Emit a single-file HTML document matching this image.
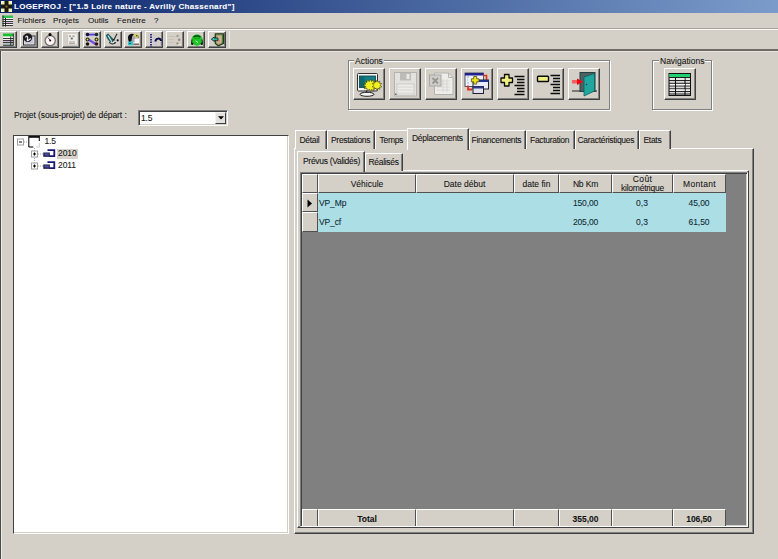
<!DOCTYPE html>
<html><head><meta charset="utf-8">
<style>
*{box-sizing:border-box;margin:0;padding:0}
html,body{width:778px;height:559px;overflow:hidden;background:#D4D0C8;font-family:"Liberation Sans",sans-serif;font-size:8.5px;color:#000}
.a{position:absolute}
.t{position:absolute;white-space:nowrap;line-height:1;color:#141414;-webkit-text-stroke:0.08px currentColor}
.n{letter-spacing:-0.3px}
#title{left:0;top:0;width:778px;height:13px;background:linear-gradient(to right,#0A246A,#7B9CCB)}
#title .t{color:#fff;font-weight:bold;font-size:8.7px;left:14px;top:2px}
.menu .t{top:16px}
.tb{position:absolute;top:31px;width:18px;height:17px;border-top:1px solid #fff;border-left:1px solid #fff;border-right:1px solid #404040;border-bottom:1px solid #404040;box-shadow:inset -1px -1px 0 #808080}
.ab{position:absolute;top:68px;width:32px;height:32px;border-top:1px solid #fff;border-left:1px solid #fff;border-right:1px solid #404040;border-bottom:1px solid #404040;box-shadow:inset -1px -1px 0 #808080}
.grp{position:absolute;border:1px solid #808080;box-shadow:1px 1px 0 #fff, inset 1px 1px 0 #fff}
.grp .t{top:-3px;background:#D4D0C8;padding:0 1px}
.sunk{border-top:1px solid #808080;border-left:1px solid #808080;border-right:1px solid #fff;border-bottom:1px solid #fff;box-shadow:inset 1px 1px 0 #404040, inset -1px -1px 0 #D4D0C8}
.raised{border-top:1px solid #fff;border-left:1px solid #fff;border-right:1px solid #404040;border-bottom:1px solid #404040;box-shadow:inset -1px -1px 0 #808080}
.tab{position:absolute;top:130px;height:19px;background:#D4D0C8;border-top:1px solid #fff;border-left:1px solid #fff;border-right:1px solid #404040;box-shadow:inset -1px 0 0 #808080}
.tab .t{top:6px;left:4px}
.hc{position:absolute;background:#D4D0C8;border-top:1px solid #fff;border-left:1px solid #fff;border-right:1px solid #505050;border-bottom:1px solid #505050}
.fc{position:absolute;background:#D4D0C8;border-top:1px solid #fff;border-left:1px solid #fff;border-right:1px solid #505050}
.hc .t{width:100%;text-align:center;left:0}
.cy{position:absolute;background:#ACDEE6}
.num{text-align:right}
.m{top:17px;font-size:8px}
.c{text-align:center}
.d{color:#102830}
.b{font-weight:bold}
</style></head><body>

<div id="title" class="a"></div>
<span class="t" style="left:14px;top:3px;color:#fff;font-weight:bold;font-size:8px;letter-spacing:0.34px">LOGEPROJ - ["1.5 Loire nature - Avrilly Chassenard"]</span>

<span class="t m" style="left:17.5px">Fichiers</span>
<span class="t m" style="left:53px;letter-spacing:0.2px">Projets</span>
<span class="t m" style="left:88px">Outils</span>
<span class="t m" style="left:117px;letter-spacing:0.2px">Fenêtre</span>
<span class="t m" style="left:154px">?</span>

<div class="a" style="left:0;top:28px;width:778px;height:1px;background:#A8A49C"></div>
<div class="a" style="left:0;top:29px;width:778px;height:1px;background:#F8F6F2"></div>
<div class="a" style="left:0;top:49px;width:778px;height:2px;background:#6E6A64"></div>
<div class="a" style="left:0;top:51px;width:778px;height:1px;background:#E8E6E0"></div>
<div class="a" style="left:0;top:51px;width:1px;height:508px;background:#4E4C48"></div>
<div class="a" style="left:1px;top:52px;width:1px;height:507px;background:#ECEAE6"></div>

<!-- toolbar buttons -->
<div class="tb" style="left:-1px"></div>
<div class="tb" style="left:20px"></div>
<div class="tb" style="left:41px"></div>
<div class="tb" style="left:62px"></div>
<div class="tb" style="left:83px"></div>
<div class="tb" style="left:104px"></div>
<div class="tb" style="left:124px"></div>
<div class="tb" style="left:145px"></div>
<div class="tb" style="left:166px"></div>
<div class="tb" style="left:187px"></div>
<div class="tb" style="left:208px"></div>
<div class="a" style="left:229px;top:31px;width:1px;height:17px;background:#ECEAE6"></div>

<!-- group boxes -->
<div class="grp" style="left:348px;top:60px;width:262px;height:50px"></div>
<div class="grp" style="left:652px;top:60px;width:60px;height:50px"></div>
<span class="t" style="left:354px;top:57px;background:#D4D0C8;padding:0 1px">Actions</span>
<span class="t" style="left:659px;top:57px;background:#D4D0C8;padding:0 1px">Navigations</span>
<div class="ab" style="left:353px"></div>
<div class="ab" style="left:389px"></div>
<div class="ab" style="left:425px"></div>
<div class="ab" style="left:461px"></div>
<div class="ab" style="left:497px"></div>
<div class="ab" style="left:532px"></div>
<div class="ab" style="left:568px"></div>
<div class="ab" style="left:664px;top:68px"></div>

<span class="t" style="left:14px;top:111px;letter-spacing:-0.08px">Projet (sous-projet) de départ :</span>
<div class="a sunk" style="left:138px;top:110px;width:90px;height:16px;background:#fff">
  <div class="hc" style="left:76px;top:1px;width:11px;height:12px;background:#E4E2DE;border-color:#F4F2EE #404040 #404040 #F4F2EE"></div>
  <svg class="a" style="left:79px;top:5px" width="6" height="4"><path d="M0 0.2h6L3 3.5z" fill="#000"/></svg>
</div>
<span class="t" style="left:141px;top:114px;letter-spacing:-0.15px">1.5</span>

<!-- Tree -->
<div class="a" style="left:13px;top:135px;width:276px;height:399px;background:#fff;border-left:1px solid #404040;border-top:1px solid #404040;border-right:1px solid #fff;border-bottom:1px solid #fff;box-shadow:inset -1px -1px 0 #D4D0C8"></div>
<div class="a" style="left:57px;top:148.5px;width:21px;height:10.5px;background:#D8D4CC"></div>
<span class="t" style="left:44.5px;top:137px;letter-spacing:-0.15px">1.5</span>
<span class="t" style="left:58px;top:149px;letter-spacing:-0.1px">2010</span>
<span class="t" style="left:58px;top:161px;letter-spacing:-0.1px">2011</span>

<!-- Outer tab panel -->
<div class="a raised" style="left:294px;top:148px;width:460px;height:386px;background:#D4D0C8"></div>
<div class="tab" style="left:295px;width:32px"></div>
<div class="tab" style="left:327px;width:48px"></div>
<div class="tab" style="left:375px;width:34px"></div>
<div class="tab" style="left:469px;width:57px"></div>
<div class="tab" style="left:526px;width:49px"></div>
<div class="tab" style="left:575px;width:64px"></div>
<div class="tab" style="left:639px;width:32px"></div>
<div class="tab" style="left:407px;top:128px;height:22px;width:62px"></div>
<span class="t n" style="left:299.5px;top:136px">Détail</span>
<span class="t n" style="left:331px;top:136px">Prestations</span>
<span class="t n" style="left:379.5px;top:136px">Temps</span>
<span class="t n" style="left:412px;top:134px">Déplacements</span>
<span class="t n" style="left:471.5px;top:136px">Financements</span>
<span class="t n" style="left:530px;top:136px">Facturation</span>
<span class="t n" style="left:577.5px;top:136px">Caractéristiques</span>
<span class="t n" style="left:643.5px;top:136px">Etats</span>

<!-- Inner tab panel -->
<div class="a raised" style="left:297px;top:170px;width:452px;height:358px;background:#D4D0C8"></div>
<div class="tab" style="left:365px;top:153px;height:18px;width:38px"></div>
<div class="tab" style="left:297px;top:151px;height:21px;width:68px"></div>
<span class="t n" style="left:303px;top:157px">Prévus (Validés)</span>
<span class="t n" style="left:368.5px;top:158px">Réalisés</span>

<!-- Grid -->
<div class="a sunk" style="left:300px;top:172px;width:448px;height:355px;background:#808080"></div>

<!-- header row -->
<div class="hc" style="left:302px;top:174px;width:16px;height:19px"></div>
<div class="hc" style="left:318px;top:174px;width:98px;height:19px"></div>
<div class="hc" style="left:416px;top:174px;width:98px;height:19px"></div>
<div class="hc" style="left:514px;top:174px;width:45px;height:19px"></div>
<div class="hc" style="left:559px;top:174px;width:53px;height:19px"></div>
<div class="hc" style="left:612px;top:174px;width:61px;height:19px"></div>
<div class="hc" style="left:673px;top:174px;width:53px;height:19px"></div>
<span class="t c" style="left:318px;width:98px;top:180px">Véhicule</span>
<span class="t c" style="left:416px;width:97px;top:180px">Date début</span>
<span class="t c" style="left:514px;width:45px;top:180px">date fin</span>
<span class="t c" style="left:559px;width:53px;top:180px;letter-spacing:-0.15px">Nb Km</span>
<span class="t c" style="left:612px;width:61px;top:175px;letter-spacing:0.4px">Coût</span>
<span class="t c" style="left:612px;width:61px;top:184px;letter-spacing:-0.25px">kilométrique</span>
<span class="t c" style="left:673px;width:53px;top:180px;letter-spacing:0.3px">Montant</span>

<!-- data rows -->
<div class="hc" style="left:302px;top:193px;width:16px;height:19px;border-bottom-color:#505050"></div>
<div class="hc" style="left:302px;top:212px;width:16px;height:20px;border-bottom-color:#505050"></div>
<div class="cy" style="left:318px;top:193px;width:408px;height:39px"></div>
<svg class="a" style="left:307px;top:199px" width="6" height="9"><path d="M0.5 0.5L5 4.5L0.5 8.5z" fill="#000"/></svg>
<span class="t d" style="left:319px;top:199px;letter-spacing:-0.13px">VP_Mp</span>
<span class="t d" style="left:319px;top:218px;letter-spacing:-0.13px">VP_cf</span>
<span class="t d c" style="left:559px;width:53px;top:199px;letter-spacing:-0.13px">150,00</span>
<span class="t d c" style="left:559px;width:53px;top:218px;letter-spacing:-0.13px">205,00</span>
<span class="t d c" style="left:612px;width:60px;top:199px;letter-spacing:0.1px">0,3</span>
<span class="t d c" style="left:612px;width:60px;top:218px;letter-spacing:0.1px">0,3</span>
<span class="t d c" style="left:673px;width:52px;top:199px;letter-spacing:-0.07px">45,00</span>
<span class="t d c" style="left:673px;width:52px;top:218px;letter-spacing:-0.07px">61,50</span>

<!-- footer row -->
<div class="fc" style="left:302px;top:509px;width:16px;height:17px"></div>
<div class="fc" style="left:318px;top:509px;width:98px;height:17px"></div>
<div class="fc" style="left:416px;top:509px;width:98px;height:17px"></div>
<div class="fc" style="left:514px;top:509px;width:45px;height:17px"></div>
<div class="fc" style="left:559px;top:509px;width:53px;height:17px"></div>
<div class="fc" style="left:612px;top:509px;width:61px;height:17px"></div>
<div class="fc" style="left:673px;top:509px;width:53px;height:17px"></div>
<span class="t c b" style="left:318px;width:98px;top:515px">Total</span>
<span class="t c b" style="left:559px;width:53px;top:515px">355,00</span>
<span class="t c b" style="left:673px;width:52px;top:515px;letter-spacing:-0.08px">106,50</span>

<!-- ICON OVERLAY -->
<svg class="a" style="left:0;top:0" width="778" height="559" viewBox="0 0 778 559">
<!-- title icon -->
<rect x="1" y="1" width="11" height="11" fill="#ECECA8"/>
<path d="M4.5 1h4v3.5h3.5v4h-3.5v3.5h-4v-3.5H1v-4h3.5z" fill="#1A1A10"/>
<path d="M5.5 5.5h2v2h-2z" fill="#8A6A20"/>
<path d="M1 1h2.5v2.5H1zM9.5 1H12v2.5H9.5zM1 9.5h2.5V12H1zM9.5 9.5H12V12H9.5z" fill="#F8F8C0"/>
<!-- menu icon -->
<rect x="2.5" y="15.5" width="10.5" height="2.5" fill="#30C050"/>
<rect x="2.5" y="18" width="10.5" height="8" fill="#F8F4F8"/>
<path d="M2.5 19.5h10.5M2.5 21.5h10.5M2.5 23.5h10.5M2.5 25.5h10.5" stroke="#202820" stroke-width="0.9"/>
<path d="M3 15.5v11M5.5 18v8.5" stroke="#182018" stroke-width="1"/>
<rect x="6" y="22" width="7" height="1" fill="#E0C0E8"/>
<!-- TB1 grid -->
<rect x="3" y="33.5" width="10.5" height="3" fill="#18C030"/>
<rect x="3" y="36.5" width="10.5" height="9" fill="#F4F4F0"/>
<rect x="3" y="40.8" width="10.5" height="1.4" fill="#D8B0E8"/>
<rect x="3" y="43" width="10.5" height="2.5" fill="#B8C4C0"/>
<path d="M3 38.5h10.5M3 40.5h10.5M3 42.5h10.5M3 45.3h10.5M10.7 36.5v9M13.3 33.5v12" stroke="#202820" stroke-width="0.9"/>
<!-- TB2 -->
<rect x="23.5" y="36" width="11.5" height="9" fill="#E4E2E8" stroke="#303030" stroke-width="1"/>
<rect x="25" y="37.5" width="8.5" height="6" fill="#C8C4D8"/>
<circle cx="27.8" cy="37.6" r="4.4" fill="#1A1A20"/>
<path d="M25.5 37.5c1-2 2.5-1.5 2.2 0.5s-1 3 0.3 2.5c1.5-0.5 2-2 3-1.5" stroke="#F0F0F0" stroke-width="1.2" fill="none"/>
<!-- TB3 stopwatch -->
<circle cx="50.2" cy="40.6" r="5.1" fill="#FAF2F4" stroke="#747070" stroke-width="1.3"/>
<circle cx="50" cy="34.6" r="1.5" fill="#000"/>
<path d="M48 37.6l2.2 2.8" stroke="#504040" stroke-width="0.9"/>
<circle cx="50.2" cy="40.5" r="1" fill="#300808"/>
<!-- TB4 disabled -->
<rect x="67" y="34" width="10" height="11" fill="#EEECE8"/>
<path d="M67.5 34.5v10.5h9.5" stroke="#C4C0B8" stroke-width="0.8" fill="none"/>
<path d="M69 36.2h2M72.5 36.2h2" stroke="#8C8A84" stroke-width="1.2"/>
<rect x="70.8" y="37.6" width="2" height="1.8" fill="#6A6864"/>
<path d="M69 42h6M69 43.6h6" stroke="#A4A29C" stroke-width="1"/>
<!-- TB5 dots -->
<path d="M89 34.6h6" stroke="#5A3CE0" stroke-width="1.8"/>
<path d="M88.5 39.5l7 4.5" stroke="#7050E8" stroke-width="2.2"/>
<circle cx="87.5" cy="34.5" r="1.8" fill="#101040"/>
<circle cx="96.5" cy="34.5" r="1.8" fill="#103030"/>
<circle cx="87.5" cy="39.5" r="1.9" fill="#202010"/>
<circle cx="87.5" cy="39.5" r="0.9" fill="#E0E040"/>
<circle cx="96.5" cy="39.5" r="1.9" fill="#202010"/>
<circle cx="96.5" cy="39.5" r="0.9" fill="#E0E040"/>
<circle cx="87.5" cy="44" r="1.8" fill="#201010"/>
<circle cx="96.5" cy="44" r="1.8" fill="#401010"/>
<!-- TB6 check -->
<path d="M105.8 35.2L108.2 33.6L113.8 39.6L112.6 42.8L110.5 42.5C108.5 40.5 106.8 38 105.8 35.2z" fill="#1E5A5A"/>
<path d="M108 35.5L111.8 41.8" stroke="#C8F4F0" stroke-width="1.1"/>
<path d="M109.3 42.3Q112 45.2 115.8 42.6" stroke="#181818" stroke-width="1.2" fill="none"/>
<path d="M110.5 42.8h3.5" stroke="#F0FAFA" stroke-width="0.9"/>
<path d="M117 33.8L114.2 39.2" stroke="#282828" stroke-width="1.1"/>
<circle cx="117.7" cy="40.3" r="1.1" fill="#101010"/>
<circle cx="113.8" cy="39.8" r="0.9" fill="#101010"/>
<!-- TB7 person -->
<rect x="131" y="36" width="4.5" height="6" fill="#A8A8B4"/>
<path d="M128 37.5C128 33.5 133 33 134.5 34.3L132.3 36L131.3 41.5L129 42.3C128.3 40.5 128 39 128 37.5z" fill="#0E0E10"/>
<path d="M133.5 34L137.5 33.8L139.8 36.5L137.5 38.3L134.5 36.3z" fill="#D4CC60"/>
<circle cx="136.8" cy="35.8" r="0.7" fill="#302810"/><circle cx="138.3" cy="37" r="0.6" fill="#302810"/>
<path d="M128 42L132.5 41L133.5 45.3H128z" fill="#30C4CC"/>
<path d="M129 43.5h2" stroke="#105050" stroke-width="0.8"/>
<rect x="134.5" y="39" width="4.5" height="4.5" fill="#F6F2F6"/>
<path d="M133.5 44.2h5.5" stroke="#603838" stroke-width="1"/>
<!-- TB8 tree -->
<path d="M151 34v13" stroke="#343088" stroke-width="2" stroke-dasharray="1.6 0.9"/>
<path d="M153 35.5h1.5M153 38.5h1.5M153 41.5h1.5M153 44.5h1.5" stroke="#C0C0F0" stroke-width="1.2"/>
<path d="M155.5 41.5c0-3.5 5.5-4 5.5-0.5" stroke="#0A0A50" stroke-width="2" fill="none"/>
<path d="M156 42.5v3M160.5 42v3" stroke="#B8B8E8" stroke-width="1"/>
<!-- TB9 disabled -->
<path d="M168.5 36.5h7M168.5 39.5h5M168.5 42.5h6" stroke="#C8C2B4" stroke-width="1"/>
<circle cx="177.5" cy="36" r="1.2" fill="#A89E8C"/>
<circle cx="179.2" cy="39.8" r="1.3" fill="#948A78"/>
<circle cx="177.5" cy="43.4" r="1.2" fill="#9A907E"/>
<path d="M178 44.5h3" stroke="#E8E4DC" stroke-width="1"/>
<!-- TB10 bug -->
<ellipse cx="197" cy="40" rx="5.6" ry="5.8" fill="#22C22A"/>
<path d="M193 36.8C194 34.8 200 34.8 201 36.8L199.5 37.5C198.5 36.5 195.5 36.5 194.5 37.5z" fill="#0A4A0A"/>
<path d="M192 39.5L191.5 43.5M202 39.5L202.5 43.5" stroke="#0A300A" stroke-width="1"/>
<circle cx="192.2" cy="43.8" r="1.2" fill="#082808"/>
<circle cx="201.8" cy="43.8" r="1.2" fill="#082808"/>
<path d="M195.5 40.8l2.5 1.8" stroke="#B0F8B0" stroke-width="1"/>
<path d="M194 38.5h6" stroke="#10A010" stroke-width="0.8"/>
<!-- TB11 door -->
<path d="M215.3 33.8h8.3v9.5l-5.3 2.4l-3-2.2z" fill="#A8A070" stroke="#1E3A1E" stroke-width="1.2"/>
<path d="M217.5 36l4.5-0.5v7l-4.5 1.5z" fill="#C8B890"/>
<path d="M222.3 35v8" stroke="#3A7A2A" stroke-width="1"/>
<path d="M217 40.8h3" stroke="#E07070" stroke-width="1.2"/>
<path d="M211.3 39.2l3-2.3v1.2h3.7v2.2h-3.7v1.2z" fill="#38C8B0" stroke="#0A1A1A" stroke-width="0.8"/>
<!-- A1 monitor -->
<rect x="357.5" y="73.5" width="20" height="17.5" rx="1" fill="#F0F4F4" stroke="#303030" stroke-width="1"/>
<rect x="359.5" y="76" width="16" height="11.5" fill="#10808A" stroke="#183838" stroke-width="0.8"/>
<rect x="360" y="76.5" width="4.5" height="10.5" fill="#0A6A70"/>
<path d="M366.5 90.5q-0.5 2 1.5 2.5" stroke="#202020" stroke-width="1.2" fill="none"/>
<ellipse cx="367" cy="94.3" rx="7" ry="2" fill="#F4F4F4" stroke="#202020" stroke-width="1"/>
<path d="M370.5 79l1.2 2.6 2-2 0.2 2.8 2.8-0.6-1.6 2.3 2.6 1.2-2.6 1.2 1.6 2.3-2.8-0.5-0.3 2.8-2-2-1.2 2.6-1.1-2.6-2 2-0.3-2.8-2.8 0.5 1.6-2.3-2.6-1.2 2.6-1.2-1.6-2.3 2.8 0.6 0.2-2.8 2 2z" fill="#F2F020" stroke="#383810" stroke-width="0.6"/>
<path d="M377 80l1 2.2 1.8-1.2-0.2 2.3 2.2 0.2-1.6 1.7 1.6 1.7-2.2 0.3 0.2 2.2-1.8-1.2-1 2.2-1-2.2-1.8 1.2 0.2-2.2-2.2-0.3 1.6-1.7-1.6-1.7 2.2-0.2-0.2-2.3 1.8 1.2z" fill="#F2F020" stroke="#383810" stroke-width="0.6"/>
<!-- A2 floppy disabled -->
<rect x="394.5" y="72.5" width="22" height="23.5" fill="#E4E2DE" stroke="#B4B2AE" stroke-width="1"/>
<rect x="400" y="73" width="11" height="7.5" fill="#BEBCB8"/>
<rect x="406.5" y="74" width="3" height="5" fill="#E8E8E8"/>
<rect x="397" y="84" width="17" height="11" fill="#EEEDEA" stroke="#C4C2BE" stroke-width="0.8"/>
<path d="M398 87h15M398 90h15M398 93h15" stroke="#D0CEC8" stroke-width="0.8"/>
<rect x="395" y="93.5" width="1.5" height="1.5" fill="#606060"/>
<!-- A3 disabled doc -->
<path d="M434.5 73h14l4.5 4.5v17h-18.5z" fill="#EEEDEA" stroke="#B4B2AE" stroke-width="1"/>
<path d="M448.5 73v4.5h4.5" fill="none" stroke="#B4B2AE" stroke-width="1"/>
<path d="M437 81h13M437 84h13M437 87h13M437 90h13M443 79v13M447 79v13" stroke="#D4D2CC" stroke-width="0.8"/>
<rect x="429.5" y="75" width="11.5" height="11" fill="#D0CECA" stroke="#A8A6A2" stroke-width="1"/>
<path d="M432.5 78l5.5 5.5M438 78l-5.5 5.5" stroke="#989690" stroke-width="1.8"/>
<!-- A4 windows -->
<rect x="465" y="73" width="18.5" height="13.5" fill="#F0F0F8" stroke="#303040" stroke-width="0.8"/>
<rect x="465" y="73" width="18.5" height="2.5" fill="#202090"/>
<path d="M467 77h2M467 80h1M467 83h2" stroke="#80A0D0" stroke-width="0.8"/>
<path d="M483 75.5h3.5v4.5" stroke="#E03020" stroke-width="1.6" fill="none"/>
<rect x="473" y="80" width="15.5" height="9" fill="#E8ECF8" stroke="#202030" stroke-width="1"/>
<rect x="473" y="80" width="15.5" height="2" fill="#203090"/>
<rect x="473" y="86.5" width="10.5" height="7" fill="#E0E0EC" stroke="#202030" stroke-width="1"/>
<rect x="473" y="86.5" width="10.5" height="2" fill="#303890"/>
<path d="M468 85.5v4h4" stroke="#E03020" stroke-width="1.8" fill="none"/>
<path d="M473.7 76.5h3v2.3h2.3v3h-2.3v2.3h-3v-2.3h-2.3v-3h2.3z" fill="#F0E020" stroke="#404000" stroke-width="0.7"/>
<!-- A5 plus lines -->
<path d="M504.5 74.5h4.5v3.5h3.5v4.5h-3.5v3.5h-4.5v-3.5h-3.5v-4.5h3.5z" fill="#F0F080" stroke="#0A0A0A" stroke-width="1.3" stroke-linejoin="round"/>
<path d="M514.5 76.5h10M517 79.5h7.5M517 82.5h7.5M514.5 85.5h10M517 88.5h7.5M517 91.5h7.5M514.5 94.5h10" stroke="#0A0A0A" stroke-width="1.3"/>
<!-- A6 minus lines -->
<rect x="537.5" y="76.2" width="11" height="5.3" rx="0.8" fill="#F0F080" stroke="#0A0A0A" stroke-width="1.4"/>
<path d="M550.5 75.5h9.5M553 78.5h7M553 81.5h7M550.5 84.5h9.5M553 87.5h7M553 90.5h7M550.5 93.5h9.5" stroke="#0A0A0A" stroke-width="1.3"/>
<!-- A7 door -->
<rect x="580" y="72.5" width="15" height="19" fill="#506060" stroke="#204040" stroke-width="1"/>
<path d="M584 77l10.5-3.5v17.5l-10.5 5z" fill="#20A8A0" stroke="#106060" stroke-width="0.8"/>
<circle cx="586.5" cy="84.5" r="0.8" fill="#104040"/>
<path d="M572 91h8M595 91h2" stroke="#202020" stroke-width="1"/>
<rect x="572" y="80" width="6" height="3.5" fill="#F06060"/>
<path d="M577 78.5l6 3.2-6 3.3z" fill="#F00010"/>
<!-- Nav table -->
<rect x="669" y="73.5" width="21.5" height="22" fill="#D8D8D8" stroke="#101010" stroke-width="1"/>
<rect x="669.5" y="74" width="20.5" height="3.5" fill="#20D070"/>
<path d="M669 77.5h21.5M669 80.5h21.5M669 83.3h21.5M669 86h21.5M669 88.8h21.5M669 91.5h21.5M669 94h21.5" stroke="#101010" stroke-width="0.9"/>
<path d="M675.5 77.5v18M685 77.5v18" stroke="#101010" stroke-width="1.1"/>
<path d="M670 79h5M676 79h9M686 79h4M670 84.7h5M676 84.7h9M686 84.7h4M670 90.2h5M676 90.2h9M686 90.2h4" stroke="#F8F8F8" stroke-width="1.2"/>

<!-- Tree icons -->
<rect x="17.5" y="139" width="6" height="6" fill="#fff" stroke="#A0A0A0" stroke-width="1"/>
<path d="M19 142h3" stroke="#000" stroke-width="1"/>
<path d="M24 142h4M34.5 148v15M38 154h5M38 166h5" stroke="#A8A8A8" stroke-width="1" stroke-dasharray="1 1"/>
<rect x="28.8" y="136.5" width="10.5" height="10.5" fill="#fff"/>
<path d="M28.8 147v-10.5h10.5v4.5" stroke="#101010" stroke-width="1.1" fill="none"/>
<rect x="29" y="136" width="10.5" height="1.8" fill="#101010"/>
<path d="M28.8 147h4.5" stroke="#101010" stroke-width="1.1"/>
<path d="M39.3 143v4h-3" stroke="#C0C0C0" stroke-width="0.8" fill="none"/>
<rect x="31.5" y="151" width="6" height="6" fill="#fff" stroke="#A0A0A0" stroke-width="1"/>
<path d="M33 154h3M34.5 152.5v3" stroke="#000" stroke-width="1"/>
<rect x="31.5" y="163" width="6" height="6" fill="#fff" stroke="#A0A0A0" stroke-width="1"/>
<path d="M33 166h3M34.5 164.5v3" stroke="#000" stroke-width="1"/>
<g>
<path d="M47.5 150.2h6.8v6h-5" stroke="#181870" stroke-width="1.8" fill="none"/>
<rect x="43.3" y="152.5" width="6.5" height="4.3" fill="#141440"/>
<rect x="44.5" y="153.3" width="4.3" height="2.3" fill="#5050A0"/>
</g>
<g transform="translate(0,12)">
<path d="M47.5 150.2h6.8v6h-5" stroke="#181870" stroke-width="1.8" fill="none"/>
<rect x="43.3" y="152.5" width="6.5" height="4.3" fill="#141440"/>
<rect x="44.5" y="153.3" width="4.3" height="2.3" fill="#5050A0"/>
</g>
</svg>

</body></html>
